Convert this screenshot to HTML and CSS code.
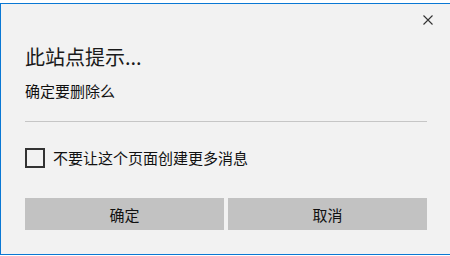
FILE: index.html
```html
<!DOCTYPE html>
<html lang="zh-CN">
<head>
<meta charset="utf-8">
<title>此站点提示...</title>
<link rel="stylesheet" href="styles.css">
</head>
<body>
<div class="dialog">
  <div class="header">
    <svg class="close" width="10" height="10" viewBox="0 0 10 10" aria-label="关闭">
      <path d="M0.5 0.5 L9.5 9.5 M9.5 0.5 L0.5 9.5" stroke="#333" stroke-width="1.1" fill="none"/>
    </svg>
  </div>
  <div class="title">此站点提示...</div>
  <div class="message">确定要删除么</div>
  <div class="divider"></div>
  <label class="check-row">
    <span class="checkbox"></span>
    <span class="check-label">不要让这个页面创建更多消息</span>
  </label>
  <div class="buttons">
    <div class="btn">确定</div>
    <div class="btn">取消</div>
  </div>
</div>
</body>
</html>
```

FILE: styles.css
```css
html, body {
  margin: 0;
  padding: 0;
  background: #ffffff;
  overflow: hidden;
  width: 450px;
  height: 256px;
}
body {
  font-family: "Noto Sans CJK SC", "Noto Sans", sans-serif;
  color: #111;
}
.dialog {
  margin-top: 3px;
  width: 450px;
  box-sizing: content-box;
  border: 1px solid #0a78d4;
  background: #f2f2f2;
  padding: 0 24px 24px 24px;
  margin-left: 0;
  display: flex;
  flex-direction: column;
  position: relative;
  left: 0;
}
.dialog {
  width: 402px;
}
.header {
  display: flex;
  justify-content: flex-end;
  padding-top: 11px;
  height: 10px;
  margin-right: -6px;
}
.close {
  display: block;
}
.title {
  margin-top: 18px;
  font-size: 20px;
  line-height: 28px;
  color: #1a1a1a;
}
.message {
  margin-top: 10px;
  font-size: 15px;
  line-height: 20px;
  color: #111;
}
.divider {
  margin-top: 20px;
  height: 1px;
  background: #c6c6c6;
}
.check-row {
  margin-top: 26px;
  display: flex;
  align-items: center;
  height: 20px;
}
.checkbox {
  width: 16px;
  height: 16px;
  border: 2px solid #333;
  flex: none;
}
.check-label {
  margin-left: 8px;
  font-size: 15px;
  line-height: 20px;
  color: #111;
}
.buttons {
  margin-top: 30px;
  display: grid;
  grid-template-columns: 1fr 1fr;
  gap: 4px;
}
.btn {
  height: 32px;
  background: #c2c2c2;
  display: flex;
  align-items: center;
  justify-content: center;
  font-size: 15px;
  color: #111;
}
```
